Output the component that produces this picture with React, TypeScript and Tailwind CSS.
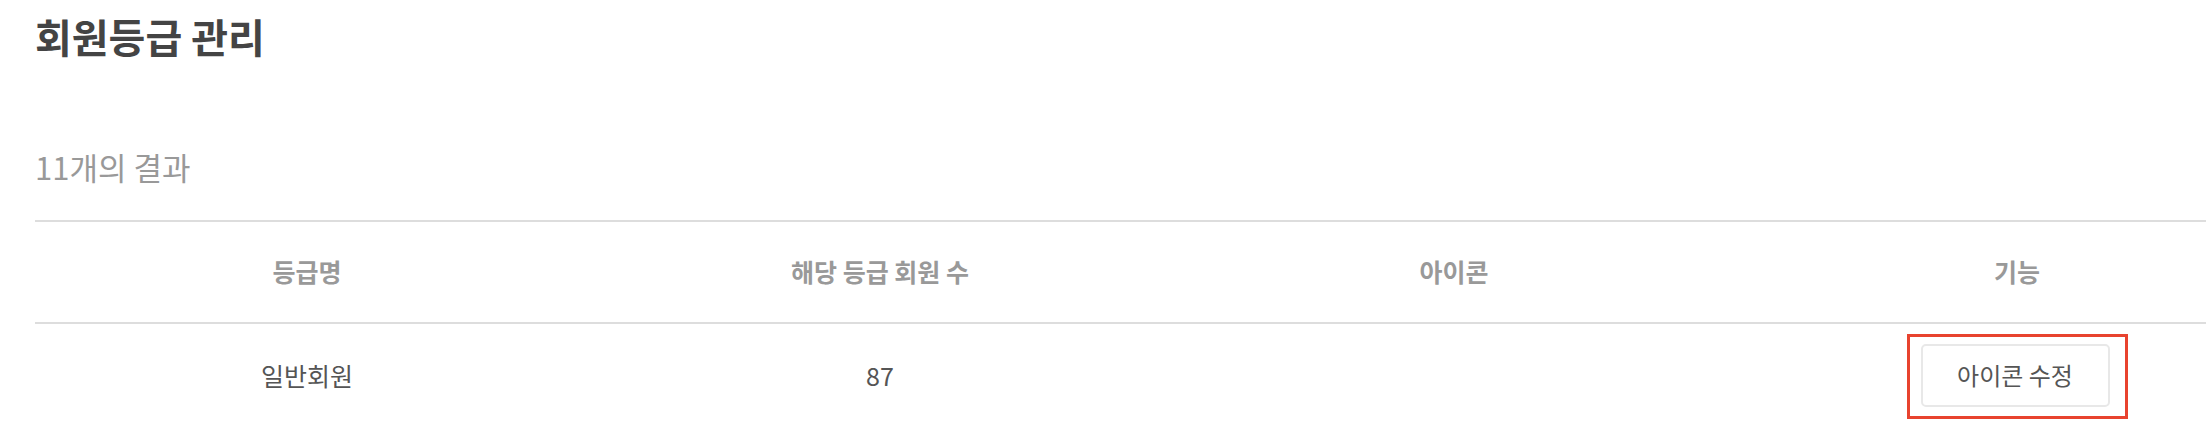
import React from "react";

const cols = "grid grid-cols-[544px_602px_546px_580px]";

export default function App() {
  return (
    <div
      className="w-[2206px] h-[424px] overflow-hidden bg-white pl-[35px]"
      style={{ fontFamily: '"Noto Sans CJK KR", "Noto Sans", sans-serif' }}
    >
      <h1 className="pt-[9px] text-[40px] leading-[54px] font-bold text-[#444]">
        회원등급 관리
      </h1>
      <div className="mt-[84px] text-[31px] leading-[40px] text-[#999]">11개의 결과</div>
      <div className="mt-[33px] w-[2272px]">
        <div className={`${cols} h-[104px] items-center border-t-2 border-b-2 border-[#ddd] text-[25px] font-bold text-[#999]`}>
          <div className="text-center">등급명</div>
          <div className="text-center">해당 등급 회원 수</div>
          <div className="text-center">아이콘</div>
          <div className="text-center">기능</div>
        </div>
        <div className={`${cols} h-[104px] items-center text-[25px] text-[#555]`}>
          <div className="text-center">일반회원</div>
          <div className="text-center">87</div>
          <div className="text-center"></div>
          <div className="flex justify-center">
            <div className="border-[3px] border-[#e8432f] pl-[11px] pr-[15px] pt-[7px] pb-[9px]">
              <button className="w-[189px] h-[63px] rounded-[5px] border-2 border-[#e8e8e8] bg-white text-[24px] text-[#555]">
                아이콘 수정
              </button>
            </div>
          </div>
        </div>
      </div>
    </div>
  );
}
